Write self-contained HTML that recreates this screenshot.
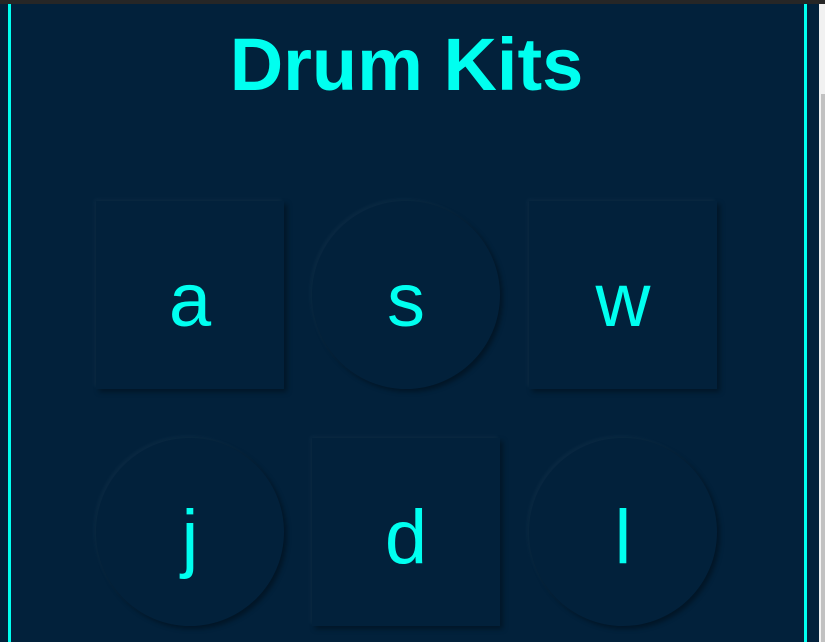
<!DOCTYPE html>
<html><head><style>
html,body{margin:0;padding:0;}
body{width:825px;height:642px;overflow:hidden;background:#02213b;position:relative;font-family:"Liberation Sans",sans-serif;}
.top{position:absolute;left:0;top:0;width:825px;height:4px;background:#262626;}
.vl{position:absolute;top:4px;width:3px;height:638px;background:#00fff0;}
.sb{position:absolute;left:819px;top:4px;width:6px;height:638px;background:#f1f1f1;}
.th{position:absolute;left:821px;top:94px;width:4px;height:548px;background:#c1c1c1;}
h1{position:absolute;left:0;width:813px;top:19px;margin:0;text-align:center;color:#00fff0;font-size:74px;font-weight:bold;line-height:92px;}
.p{position:absolute;width:188px;height:188px;background:#02213b;box-shadow:3px 3px 5px rgba(0,0,0,.35),-2px -2px 4px rgba(255,255,255,.04);color:#00fff0;font-size:76px;text-align:center;line-height:200px;}
.c{border-radius:50%;}
</style></head><body>
<div class="top"></div>
<div class="vl" style="left:8px"></div>
<div class="vl" style="left:804px"></div>
<div class="sb"></div><div class="th"></div>
<h1>Drum Kits</h1>
<div class="p" style="left:96px;top:201px">a</div>
<div class="p c" style="left:312px;top:201px">s</div>
<div class="p" style="left:529px;top:201px">w</div>
<div class="p c" style="left:96px;top:438px">j</div>
<div class="p" style="left:312px;top:438px">d</div>
<div class="p c" style="left:529px;top:438px">l</div>
</body></html>
